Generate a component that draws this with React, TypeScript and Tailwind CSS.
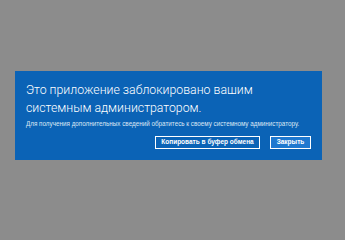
export default function App() {
  return (
    <div className="w-[345px] h-[240px] bg-[#8c8c8c] pt-[71px] pl-[15px]" style={{ fontFamily: '"Liberation Sans", Arial, sans-serif' }}>
      <div className="w-[307px] h-[89px] bg-[#0b63b6] pl-[11px] pr-[11px] pt-[10px] text-white">
        <div className="text-[12.3px] leading-[18px] font-light font-['Roboto',sans-serif]">
          Это приложение заблокировано вашим
          <br />
          системным администратором.
        </div>
        <div className="mt-[2px] text-[6.3px] leading-[9px] text-[#dce8f5]">
          Для получения дополнительных сведений обратитесь к своему системному администратору.
        </div>
        <div className="mt-[8px] flex justify-end gap-[10px]">
          <button className="h-[13px] w-[105px] border border-white bg-[#0b63b6] text-[6.5px] font-bold leading-none text-white">
            Копировать в буфер обмена
          </button>
          <button className="h-[13px] w-[41px] border border-white bg-[#1f78cf] text-[6.5px] font-bold leading-none text-white">
            Закрыть
          </button>
        </div>
      </div>
    </div>
  );
}
